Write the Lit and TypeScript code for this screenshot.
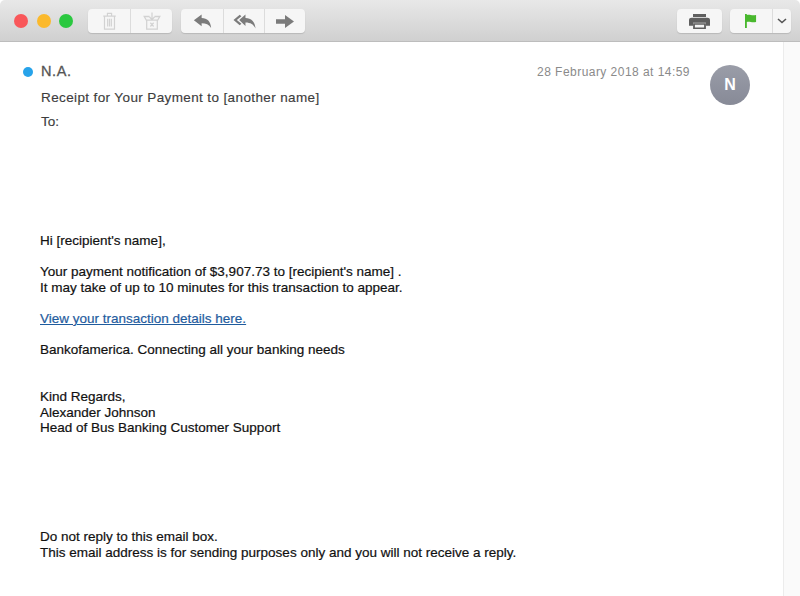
import { LitElement, html, css, svg } from "lit";
import { customElement } from "lit/decorators.js";

const trash = svg`<svg width="15" height="18" viewBox="0 0 18 20" preserveAspectRatio="none" fill="none" stroke="#d2d2d2" stroke-width="1.4"><path d="M1.500 4.500h15M6.500 4.500V1.500h5v3M3 4.500v14.500h12V4.500M6.800 7.500v8.500M9 7.500v8.500M11.200 7.500v8.500"/></svg>`;
const junk = svg`<svg width="18" height="18" viewBox="0 0 22 20" preserveAspectRatio="none" fill="none" stroke="#d2d2d2" stroke-width="1.500"><path d="M8 5H1.500l2.500 4h14l2.500-4H14M4.500 9v10h13V9M11 .5v8M8 5.500L11 8.500l3-3M9 12l4 4M13 12l-4 4"/></svg>`;
const reply = svg`<svg width="19" height="15" viewBox="0 0 22 17" preserveAspectRatio="none" fill="#7b7b7b"><path d="M1 7L10 .5v4c6.500 0 10.500 4 11 11.500-2.500-4-6-5.500-11-5.500V14z"/></svg>`;
const replyAll = svg`<svg width="23" height="15" viewBox="0 0 24 15" preserveAspectRatio="none" fill="#7b7b7b"><path d="M7 .8L.5 6 7 11.200 8.800 9.800 4 6 8.800 2.200z"/><path d="M6.500 6L13 .5v3.500c6 0 10 4 10.500 10.500-2-4-5-6-10.500-6V12z"/></svg>`;
const forward = svg`<svg width="18" height="13" viewBox="0 0 18 14" preserveAspectRatio="none" fill="#7b7b7b"><path d="M0 4.500h9V0l9 7-9 7V9.500H0z"/></svg>`;
const printer = svg`<svg width="21" height="15" viewBox="0 0 21 18" preserveAspectRatio="none"><path fill="#5f5f5f" d="M4 0h13v3.500H4zM2.500 4.500h16A2.500 2.500 0 0 1 21 7v7h-4v-3.500H4V14H0V7a2.500 2.500 0 0 1 2.500-2.500z"/><path fill="none" stroke="#5f5f5f" stroke-width="1.800" d="M5 12h11v5H5z"/></svg>`;
const flag = svg`<svg width="12" height="14" viewBox="0 0 13 15"><path fill="#49b82e" d="M0 0h2v15H0zM2 1c3-1 5 1 10 0v7.500c-5 1-7-1-10 0z"/></svg>`;
const chevron = svg`<svg width="10" height="6" viewBox="0 0 10 6" fill="none" stroke="#555" stroke-width="1.600"><path d="M1 1l4 3.500L9 1"/></svg>`;

@customElement("app-root")
export class AppRoot extends LitElement {
  static styles = css`
    :host { display: block; width: 800px; height: 596px; overflow: hidden; background: #fff; font-family: "Liberation Sans", Arial, sans-serif; }
    .toolbar { height: 42px; box-sizing: border-box; display: flex; align-items: flex-start; padding: 9px 9px 0 14px; background: linear-gradient(#e8e8e8, #d0d0d0); border-bottom: 1px solid #bdbdbd; border-radius: 5px 5px 0 0; }
    .lights { display: flex; gap: 8.5px; margin: 5px 15px 0 0; }
    .light { width: 14px; height: 14px; border-radius: 50%; }
    .red { background: #f9575a; } .yellow { background: #fbb92c; } .green { background: #2bc840; }
    .group { height: 24px; display: flex; background: #f6f6f6; border-radius: 4px; box-shadow: 0 1px 1px #b9b9b9; }
    .group + .group { margin-left: 9px; }
    .group.spread { margin-left: auto; }
    .group.spread + .group { margin-left: 8px; }
    .cell { box-sizing: border-box; display: flex; align-items: center; justify-content: center; border-left: 1px solid #dcdcdc; }
    .cell:first-child { border-left: 0; }
    .w42 { width: 42px; } .w41 { width: 41px; } .w45 { width: 45px; } .w19 { width: 19px; }
    .page { display: flex; height: 554px; }
    .mail { flex: 1; min-width: 0; padding: 0 0 0 41px; position: relative; }
    .gutter { width: 16px; background: #fafafa; border-left: 1px solid #ececec; }
    .head { height: 96px; box-sizing: border-box; padding-top: 21px; color: #3d3d3d; }
    .name-row { display: flex; justify-content: space-between; align-items: baseline; height: 18px; padding-right: 93px; }
    .name { font-size: 14.5px; color: #555; letter-spacing: .6px; -webkit-text-stroke: .3px #555; }
    .dot { position: absolute; left: 23px; top: 25px; width: 10px; height: 10px; border-radius: 50%; background: #27a3ea; }
    .date { font-size: 12px; color: #8a8a8a; letter-spacing: .46px; }
    .subject { margin-top: 9px; height: 16px; line-height: 16px; font-size: 13.5px; letter-spacing: .38px; -webkit-text-stroke: .15px #3d3d3d; }
    .to { margin-top: 8px; line-height: 16px; font-size: 13.5px; -webkit-text-stroke: .15px #3d3d3d; }
    .avatar { position: absolute; left: 710px; top: 23px; width: 40px; height: 40px; border-radius: 50%; background: linear-gradient(#9a9da8, #878a97); color: #fff; display: flex; align-items: center; justify-content: center; font-size: 16px; font-weight: 700; }
    .body { margin-left: -1px; padding-top: 95px; font-size: 13.5px; line-height: 15.6px; color: #111; -webkit-text-stroke: .2px #111; }
    .body p { margin: 0 0 15.6px; }
    .body p.gap2 { margin-bottom: 31.2px; }
    .body p.gap5 { margin-bottom: 93.6px; }
    a { color: #1f5c9e; -webkit-text-stroke-color: #1f5c9e; text-decoration: underline; }
  `;

  render() {
    return html`
      <div class="toolbar">
        <div class="lights"><span class="light red"></span><span class="light yellow"></span><span class="light green"></span></div>
        <div class="group"><span class="cell w42">${trash}</span><span class="cell w42">${junk}</span></div>
        <div class="group"><span class="cell w42">${reply}</span><span class="cell w41">${replyAll}</span><span class="cell w41">${forward}</span></div>
        <div class="group spread"><span class="cell w45">${printer}</span></div>
        <div class="group"><span class="cell w42">${flag}</span><span class="cell w19">${chevron}</span></div>
      </div>
      <div class="page">
        <div class="mail">
          <div class="head">
            <span class="dot"></span>
            <div class="name-row"><span class="name">N.A.</span><span class="date">28 February 2018 at 14:59</span></div>
            <div class="subject">Receipt for Your Payment to [another name]</div>
            <div class="to">To:</div>
            <div class="avatar">N</div>
          </div>
          <div class="body">
            <p>Hi [recipient's name],</p>
            <p>Your payment notification of $3,907.73 to [recipient's name] .<br>It may take of up to 10 minutes for this transaction to appear.</p>
            <p><a href="#">View your transaction details here.</a></p>
            <p class="gap2">Bankofamerica. Connecting all your banking needs</p>
            <p class="gap5">Kind Regards,<br>Alexander Johnson<br>Head of Bus Banking Customer Support</p>
            <p>Do not reply to this email box.<br>This email address is for sending purposes only and you will not receive a reply.</p>
          </div>
        </div>
        <div class="gutter"></div>
      </div>
    `;
  }
}
